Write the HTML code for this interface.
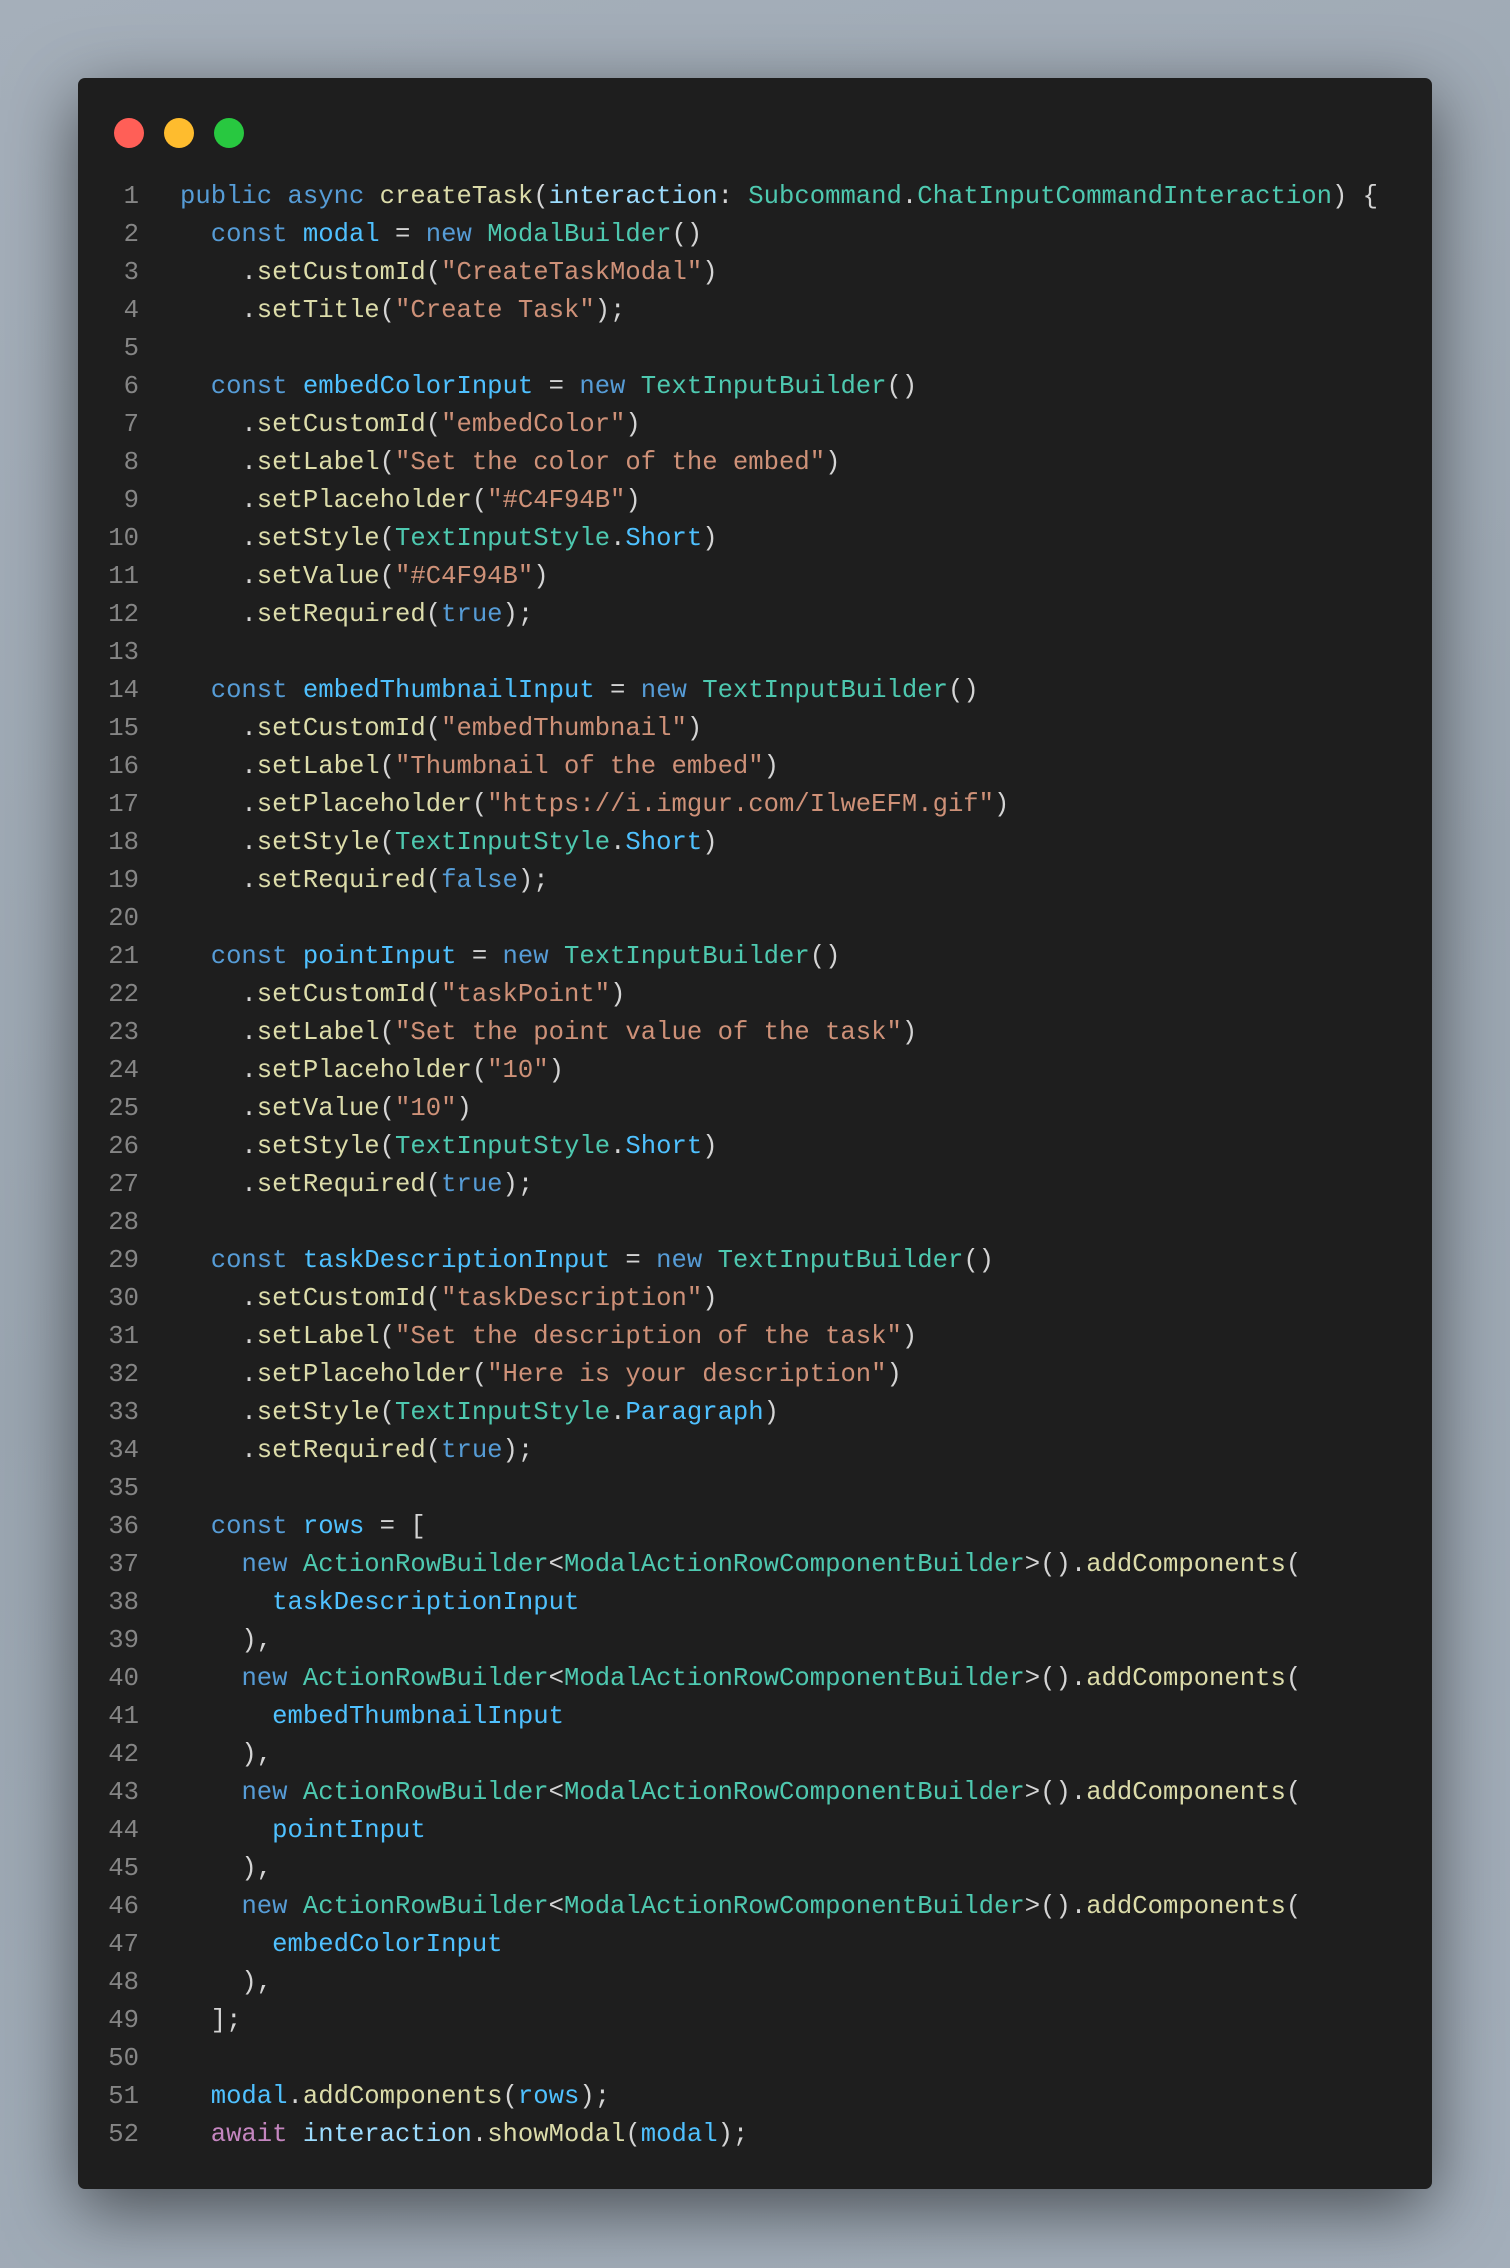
<!DOCTYPE html>
<html><head><meta charset="utf-8"><style>
html,body{margin:0;padding:0;width:1510px;height:2268px;overflow:hidden;}
body{background:linear-gradient(160deg,#a5afba 0%,#9aa5b0 50%,#a3aeba 100%);position:relative;}
.win{position:absolute;left:78px;top:78px;width:1354px;height:2111px;background:#1e1e1e;border-radius:7px;box-shadow:0 20px 70px rgba(0,0,0,0.55);}
.dot{position:absolute;top:40px;width:30px;height:30px;border-radius:50%;}
pre{position:absolute;margin:0;top:100px;left:0;font-family:"Liberation Mono",monospace;font-size:25.6px;line-height:38px;color:#d4d4d4;}
.ln{display:inline-block;width:61px;text-align:right;color:#858585;margin-right:41px;}
.k{color:#569cd6}.v{color:#4fc1ff}.p{color:#9cdcfe}.f{color:#dcdcaa}.s{color:#ce9178}.t{color:#4ec9b0}.a{color:#c586c0}
</style></head><body>
<div class="win">
<div class="dot" style="left:36px;background:#ff5f57"></div>
<div class="dot" style="left:86px;background:#febc2e"></div>
<div class="dot" style="left:136px;background:#28c840"></div>
<pre><span class="ln">1</span><span class="k">public</span> <span class="k">async</span> <span class="f">createTask</span>(<span class="p">interaction</span>: <span class="t">Subcommand</span>.<span class="t">ChatInputCommandInteraction</span>) {
<span class="ln">2</span>  <span class="k">const</span> <span class="v">modal</span> = <span class="k">new</span> <span class="t">ModalBuilder</span>()
<span class="ln">3</span>    .<span class="f">setCustomId</span>(<span class="s">"CreateTaskModal"</span>)
<span class="ln">4</span>    .<span class="f">setTitle</span>(<span class="s">"Create Task"</span>);
<span class="ln">5</span>
<span class="ln">6</span>  <span class="k">const</span> <span class="v">embedColorInput</span> = <span class="k">new</span> <span class="t">TextInputBuilder</span>()
<span class="ln">7</span>    .<span class="f">setCustomId</span>(<span class="s">"embedColor"</span>)
<span class="ln">8</span>    .<span class="f">setLabel</span>(<span class="s">"Set the color of the embed"</span>)
<span class="ln">9</span>    .<span class="f">setPlaceholder</span>(<span class="s">"#C4F94B"</span>)
<span class="ln">10</span>    .<span class="f">setStyle</span>(<span class="t">TextInputStyle</span>.<span class="v">Short</span>)
<span class="ln">11</span>    .<span class="f">setValue</span>(<span class="s">"#C4F94B"</span>)
<span class="ln">12</span>    .<span class="f">setRequired</span>(<span class="k">true</span>);
<span class="ln">13</span>
<span class="ln">14</span>  <span class="k">const</span> <span class="v">embedThumbnailInput</span> = <span class="k">new</span> <span class="t">TextInputBuilder</span>()
<span class="ln">15</span>    .<span class="f">setCustomId</span>(<span class="s">"embedThumbnail"</span>)
<span class="ln">16</span>    .<span class="f">setLabel</span>(<span class="s">"Thumbnail of the embed"</span>)
<span class="ln">17</span>    .<span class="f">setPlaceholder</span>(<span class="s">"https://i.imgur.com/IlweEFM.gif"</span>)
<span class="ln">18</span>    .<span class="f">setStyle</span>(<span class="t">TextInputStyle</span>.<span class="v">Short</span>)
<span class="ln">19</span>    .<span class="f">setRequired</span>(<span class="k">false</span>);
<span class="ln">20</span>
<span class="ln">21</span>  <span class="k">const</span> <span class="v">pointInput</span> = <span class="k">new</span> <span class="t">TextInputBuilder</span>()
<span class="ln">22</span>    .<span class="f">setCustomId</span>(<span class="s">"taskPoint"</span>)
<span class="ln">23</span>    .<span class="f">setLabel</span>(<span class="s">"Set the point value of the task"</span>)
<span class="ln">24</span>    .<span class="f">setPlaceholder</span>(<span class="s">"10"</span>)
<span class="ln">25</span>    .<span class="f">setValue</span>(<span class="s">"10"</span>)
<span class="ln">26</span>    .<span class="f">setStyle</span>(<span class="t">TextInputStyle</span>.<span class="v">Short</span>)
<span class="ln">27</span>    .<span class="f">setRequired</span>(<span class="k">true</span>);
<span class="ln">28</span>
<span class="ln">29</span>  <span class="k">const</span> <span class="v">taskDescriptionInput</span> = <span class="k">new</span> <span class="t">TextInputBuilder</span>()
<span class="ln">30</span>    .<span class="f">setCustomId</span>(<span class="s">"taskDescription"</span>)
<span class="ln">31</span>    .<span class="f">setLabel</span>(<span class="s">"Set the description of the task"</span>)
<span class="ln">32</span>    .<span class="f">setPlaceholder</span>(<span class="s">"Here is your description"</span>)
<span class="ln">33</span>    .<span class="f">setStyle</span>(<span class="t">TextInputStyle</span>.<span class="v">Paragraph</span>)
<span class="ln">34</span>    .<span class="f">setRequired</span>(<span class="k">true</span>);
<span class="ln">35</span>
<span class="ln">36</span>  <span class="k">const</span> <span class="v">rows</span> = [
<span class="ln">37</span>    <span class="k">new</span> <span class="t">ActionRowBuilder</span>&lt;<span class="t">ModalActionRowComponentBuilder</span>&gt;().<span class="f">addComponents</span>(
<span class="ln">38</span>      <span class="v">taskDescriptionInput</span>
<span class="ln">39</span>    ),
<span class="ln">40</span>    <span class="k">new</span> <span class="t">ActionRowBuilder</span>&lt;<span class="t">ModalActionRowComponentBuilder</span>&gt;().<span class="f">addComponents</span>(
<span class="ln">41</span>      <span class="v">embedThumbnailInput</span>
<span class="ln">42</span>    ),
<span class="ln">43</span>    <span class="k">new</span> <span class="t">ActionRowBuilder</span>&lt;<span class="t">ModalActionRowComponentBuilder</span>&gt;().<span class="f">addComponents</span>(
<span class="ln">44</span>      <span class="v">pointInput</span>
<span class="ln">45</span>    ),
<span class="ln">46</span>    <span class="k">new</span> <span class="t">ActionRowBuilder</span>&lt;<span class="t">ModalActionRowComponentBuilder</span>&gt;().<span class="f">addComponents</span>(
<span class="ln">47</span>      <span class="v">embedColorInput</span>
<span class="ln">48</span>    ),
<span class="ln">49</span>  ];
<span class="ln">50</span>
<span class="ln">51</span>  <span class="v">modal</span>.<span class="f">addComponents</span>(<span class="v">rows</span>);
<span class="ln">52</span>  <span class="a">await</span> <span class="p">interaction</span>.<span class="f">showModal</span>(<span class="v">modal</span>);</pre>
</div>
</body></html>
